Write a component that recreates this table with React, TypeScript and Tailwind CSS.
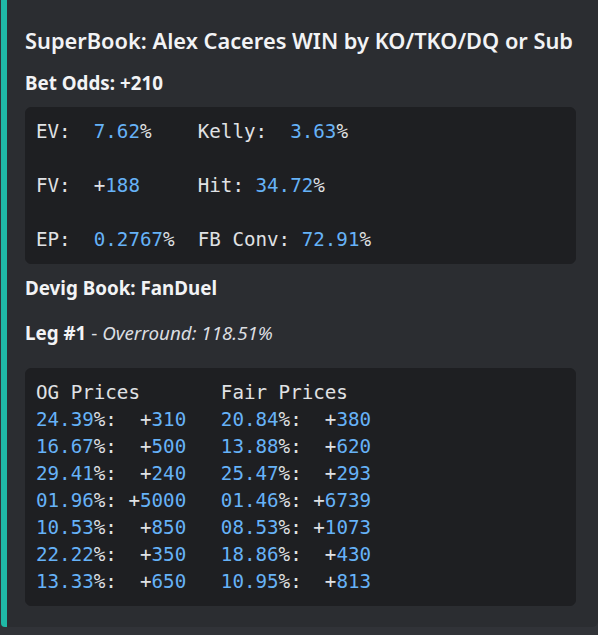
import React from "react";

const statsLines = [
  "EV:  7.62%    Kelly:  3.63%",
  "",
  "FV:  +188     Hit: 34.72%",
  "",
  "EP:  0.2767%  FB Conv: 72.91%",
];

const priceLines = [
  "OG Prices       Fair Prices",
  "24.39%:  +310   20.84%:  +380",
  "16.67%:  +500   13.88%:  +620",
  "29.41%:  +240   25.47%:  +293",
  "01.96%: +5000   01.46%: +6739",
  "10.53%:  +850   08.53%: +1073",
  "22.22%:  +350   18.86%:  +430",
  "13.33%:  +650   10.95%:  +813",
];

// numbers get the blue highlight, everything else stays plain
const highlight = (line: string) =>
  line.split(/(\d+(?:\.\d+)?)/).map((part, i) =>
    /^\d/.test(part) ? (
      <span key={i} className="text-[#66b2f7]">
        {part}
      </span>
    ) : (
      <span key={i}>{part}</span>
    )
  );

const CodeBlock = ({ lines }: { lines: string[] }) => (
  <pre className="rounded-[6px] border border-[#1e1f22] bg-[#1e1f22] px-[10px] py-[10px] font-['DejaVu_Sans_Mono',monospace] text-[19.2px] leading-[27px] text-[#e0e2e5]">
    {lines.map((line, i) => (
      <div key={i} className="h-[27px] whitespace-pre">
        {highlight(line)}
      </div>
    ))}
  </pre>
);

export default function App() {
  return (
    <div className="h-[635px] w-[598px] overflow-hidden bg-[#313338] pl-px font-['Noto_Sans',sans-serif]">
      <div className="flex h-[627px] rounded-b-[6px] bg-[#2b2d31]">
        <div className="w-[6px] shrink-0 rounded-bl-[4px] bg-[#1fb8a6]" />
        <div className="flex-1 pl-[18px] pr-[22px] pt-[26px]">
          <h2 className="whitespace-nowrap text-[21.8px] font-semibold leading-[29px] text-[#f2f3f5]">
            SuperBook: Alex Caceres WIN by KO/TKO/DQ or Sub
          </h2>
          <p className="mt-[16px] text-[18.8px] font-bold leading-[24px] text-[#f2f3f5]">Bet Odds: +210</p>
          <div className="mt-[12px]">
            <CodeBlock lines={statsLines} />
          </div>
          <p className="mt-[12px] text-[18.8px] font-bold leading-[24px] text-[#f2f3f5]">Devig Book: FanDuel</p>
          <p className="mt-[21px] text-[18.8px] leading-[24px] text-[#dbdee1]">
            <span className="font-bold text-[#f2f3f5]">Leg #1</span> - <em>Overround: 118.51%</em>
          </p>
          <div className="mt-[23px]">
            <CodeBlock lines={priceLines} />
          </div>
        </div>
      </div>
    </div>
  );
}
